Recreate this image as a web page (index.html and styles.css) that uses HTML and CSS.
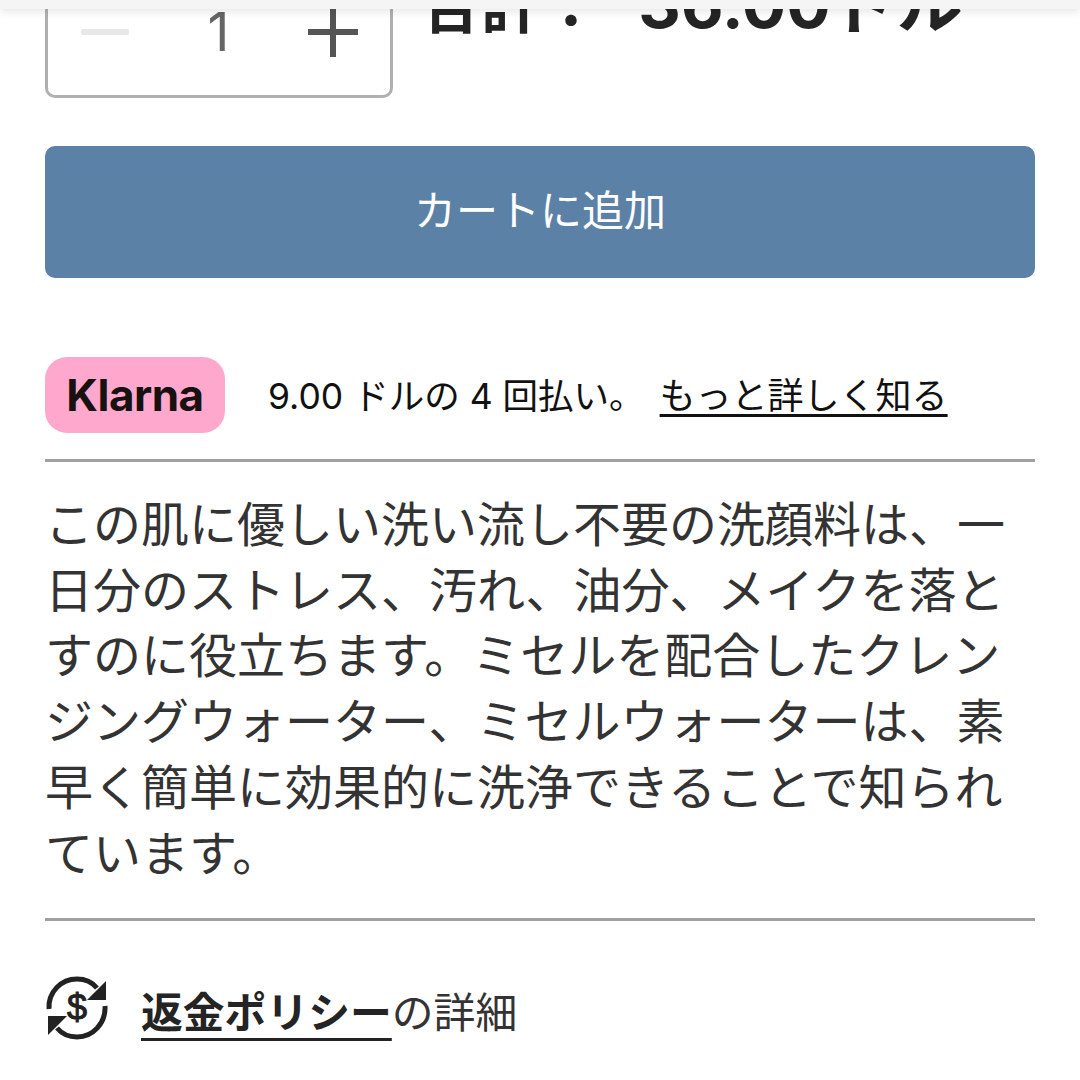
FILE: index.html
```html
<!DOCTYPE html>
<html lang="ja">
<head>
<meta charset="utf-8">
<title>カートに追加</title>
<link rel="stylesheet" href="styles.css">
</head>
<body>
<div class="topbar"></div>
<main class="page">
  <section class="buy-row">
    <div class="qty">
      <span class="qty-minus"></span>
      <span class="qty-num">1</span>
      <svg class="qty-plus" viewBox="0 0 50 50" aria-hidden="true"><path d="M25 1V49M1 25H49" fill="none" stroke="#555" stroke-width="6" stroke-linecap="round"/></svg>
    </div>
    <div class="total">合計： <span class="total-amount">36.00ドル</span></div>
  </section>
  <button class="add-btn"><span class="add-label">カートに追加</span></button>
  <section class="klarna-row">
    <span class="klarna-badge">Klarna</span>
    <p class="klarna-text">9.00 ドルの 4 回払い。 <a class="klarna-link">もっと詳しく知る</a></p>
  </section>
  <p class="desc">この肌に優しい洗い流し不要の洗顔料は、一日分のストレス、汚れ、油分、メイクを落とすのに役立ちます。ミセルを配合したクレンジングウォーター、ミセルウォーターは、素早く簡単に効果的に洗浄できることで知られています。</p>
  <section class="refund">
    <svg class="refund-icon" viewBox="0 0 64 64" aria-hidden="true">
      <path d="M4 33C3 16 16 3 32 3c8 0 15 3 20 9" fill="none" stroke="#222" stroke-width="5"/>
      <path d="M61 5V24H42Z" fill="#222"/>
      <path d="M60 30c1 17-12 31-28 31-8 0-15-3-20-9" fill="none" stroke="#222" stroke-width="5"/>
      <path d="M3 59V40H22Z" fill="#222"/>
      <text class="refund-dollar" x="32" y="44" text-anchor="middle">$</text>
    </svg>
    <p class="refund-text"><a class="refund-link">返金ポリシー</a>の詳細</p>
  </section>
</main>
</body>
</html>
```
FILE: styles.css
```css
html, body {
  margin: 0;
  padding: 0;
  background: #fff;
}
body {
  width: 1080px;
  height: 1080px;
  overflow: hidden;
  position: relative;
  font-family: "Noto Sans CJK JP", "Noto Sans", sans-serif;
  color: #242424;
}
.topbar {
  position: absolute;
  top: 0;
  left: 0;
  width: 1080px;
  height: 9px;
  background: #f5f5f5;
  box-shadow: 0 2px 10px rgba(0, 0, 0, .12);
  z-index: 2;
}
.page {
  margin-top: -35px;
  padding: 0 45px;
}
.buy-row {
  display: flex;
  gap: 28px;
  align-items: flex-start;
}
.qty {
  box-sizing: border-box;
  width: 348px;
  height: 133px;
  border: 3px solid #b0b0b0;
  border-radius: 10px;
  display: flex;
  align-items: center;
  justify-content: space-between;
  padding: 0 32px 0 33px;
}
.qty-minus {
  width: 48px;
  height: 6px;
  background: #e8e8e8;
  border-radius: 2px;
}
.qty-num {
  font-family: "Inter", sans-serif;
  font-size: 54px;
  line-height: 60px;
  color: #666;
  font-weight: 400;
}
.qty-plus {
  width: 50px;
  height: 50px;
}
.total {
  font-family: "Inter", "Noto Sans CJK JP", sans-serif;
  font-size: 60px;
  font-weight: 700;
  line-height: 80px;
  margin-top: -1px;
  white-space: nowrap;
}
.total-amount {
  font-size: 66px;
  margin-left: 23px;
}
.add-btn {
  display: block;
  width: 990px;
  height: 132px;
  margin-top: 48px;
  padding: 0 0 10px;
  border: 0;
  border-radius: 10px;
  background: #5b81a6;
  color: #fff;
  font-family: inherit;
}
.add-label {
  font-size: 42px;
}
.klarna-row {
  display: flex;
  align-items: center;
  gap: 43px;
  margin-top: 79px;
  padding-bottom: 26px;
  border-bottom: 3px solid #a0a0a0;
}
.klarna-badge {
  box-sizing: border-box;
  width: 180px;
  height: 76px;
  border-radius: 22px;
  background: #ffa8cd;
  color: #17120f;
  font-family: "Inter", sans-serif;
  font-weight: 700;
  font-size: 44px;
  letter-spacing: -.5px;
  line-height: 76px;
  text-align: center;
}
.klarna-text {
  margin: 0;
  font-size: 35.5px;
  color: #111;
  white-space: nowrap;
  font-family: "Inter", "Noto Sans CJK JP", sans-serif;
  position: relative;
  top: -2px;
}
.klarna-link {
  font-size: 36px;
  text-decoration: underline;
  text-underline-offset: 5px;
  text-decoration-thickness: 3px;
  margin-left: 5px;
}
.desc {
  margin: 0;
  padding: 27px 0 35px;
  font-size: 48px;
  line-height: 65.7px;
  color: #333;
  border-bottom: 3px solid #a0a0a0;
}
.refund {
  display: flex;
  align-items: center;
  gap: 32px;
  margin-top: 55px;
}
.refund-icon {
  width: 64px;
  height: 64px;
  flex: none;
}
.refund-dollar {
  font-family: "Liberation Sans", sans-serif;
  font-size: 36px;
  font-weight: 400;
  fill: #222;
  stroke: #222;
  stroke-width: 1px;
}
.refund-text {
  margin: 0;
  font-size: 41.8px;
  line-height: 60px;
  color: #333;
  position: relative;
  top: 2px;
}
.refund-link {
  font-weight: 700;
  color: #242424;
  text-decoration: underline;
  text-underline-offset: 10px;
  text-decoration-thickness: 3px;
}
```
